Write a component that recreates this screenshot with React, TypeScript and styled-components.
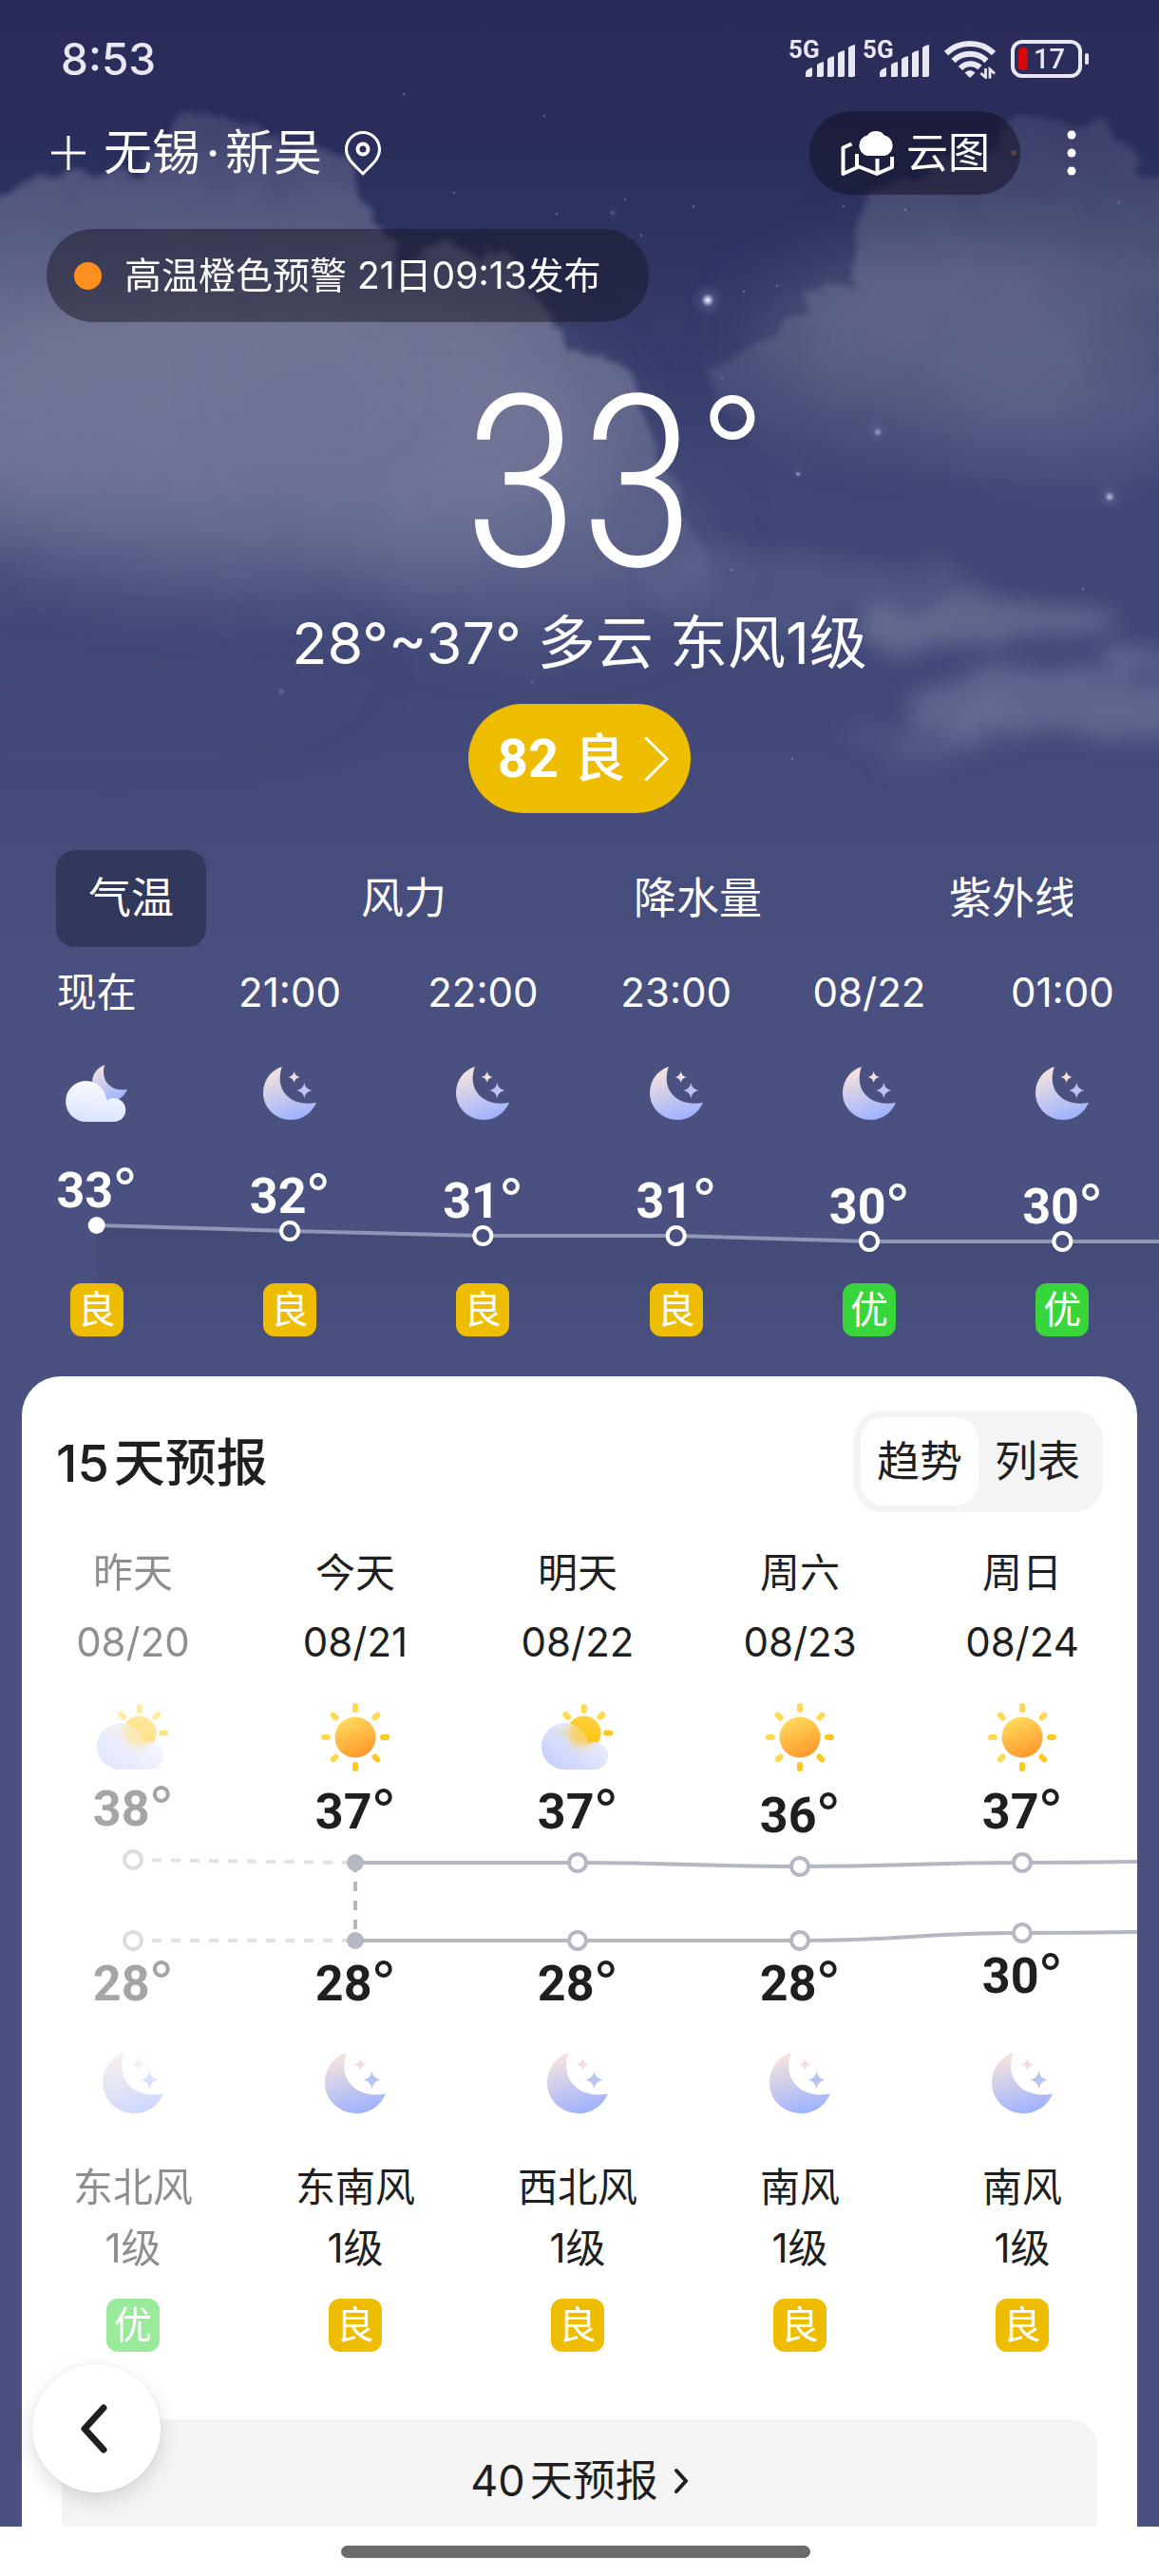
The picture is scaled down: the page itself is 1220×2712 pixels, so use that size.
import React, { useState } from "react";
import styled, { createGlobalStyle } from "styled-components";

const SANS = `Inter, "Noto Sans CJK SC", "Noto Sans", sans-serif`;
const DIGITS = `Roboto, "Noto Sans CJK SC", sans-serif`;
const NARROW = `"Roboto Condensed", Roboto, sans-serif`;
const INK = "#1f1f1f";
const GOOD = "#efbd00";
const BEST = "#38d63b";
const LINE = "#b5b8c2";

const GlobalStyle = createGlobalStyle`
  *, *::before, *::after { box-sizing: border-box; }
  body { margin: 0; background: #fff; font-family: ${SANS}; }
  button { font: inherit; color: inherit; border: 0; padding: 0; background: none; cursor: pointer; }
  h1, h2, p { margin: 0; font-weight: 400; }
  svg { display: block; flex: none; }
`;

const Screen = styled.div`
  position: relative;
  height: 100vh;
  display: flex;
  flex-direction: column;
  overflow: hidden;
`;

const Scroller = styled.main`
  position: relative;
  flex: 1;
  min-height: 0;
  overflow-y: auto;
  scrollbar-width: none;
  color: #fff;
  background: #4a5181;
`;

const Content = styled.div`
  position: relative;
`;

const HiddenDefs = styled.svg`
  position: absolute;
`;

const SkySvg = styled.svg`
  position: absolute;
  inset: 0 0 auto 0;
  width: 100%;
  height: 1100px;
`;

const StatusBar = styled.div`
  position: relative;
  height: 90px;
  padding: 34px 74px 0 64px;
  display: flex;
  align-items: center;
  justify-content: space-between;
  color: #e9e8f2;
`;

const Clock = styled.time`
  font-size: 46px;
  line-height: 56px;
  font-weight: 500;
`;

const StatusIcons = styled.div`
  display: flex;
  align-items: center;
`;

const Signal = styled.div`
  display: flex;
  align-items: flex-start;
  width: 78px;
  height: 40px;
`;

const Network = styled.span`
  width: 18px;
  font-size: 26px;
  line-height: 20px;
  font-weight: 700;
  font-family: ${DIGITS};
  white-space: nowrap;
`;

const BarsSvg = styled.svg`
  margin-top: 5px;
`;

const WifiBox = styled.span`
  margin: 0 16px 0 8px;
`;

const Battery = styled.div`
  display: flex;
  align-items: center;
  gap: 3px;
  &::after {
    content: "";
    width: 4px;
    height: 12px;
    border-radius: 2px;
    background: currentColor;
  }
`;

const BatteryBody = styled.div`
  width: 75px;
  height: 40px;
  padding: 0 14px 0 4px;
  border: 4px solid currentColor;
  border-radius: 12px;
  display: flex;
  align-items: center;
  gap: 6px;
  font-size: 29px;
  line-height: 28px;
  font-weight: 500;
  font-family: ${DIGITS};
  &::before {
    content: "";
    flex: none;
    width: 10px;
    height: 24px;
    border-radius: 4px;
    background: #d40808;
  }
`;

const Header = styled.header`
  position: relative;
  margin-top: 27px;
  height: 88px;
  padding: 0 66px 0 54px;
  display: flex;
  align-items: center;
`;

const IconButton = styled.button`
  display: flex;
  align-items: center;
  justify-content: center;
`;

const City = styled.h1`
  display: flex;
  margin: 0 24px 0 19px;
  font-size: 51px;
  line-height: 60px;
`;

const CityDot = styled.span`
  width: 26px;
  text-align: center;
`;

const CloudMap = styled.button`
  margin-left: auto;
  height: 88px;
  padding: 0 32px 0 33px;
  border-radius: 44px;
  background: rgba(14, 14, 32, 0.5);
  display: flex;
  align-items: center;
  gap: 12px;
  font-size: 44px;
  line-height: 56px;
`;

const MoreButton = styled(IconButton)`
  width: 52px;
  height: 60px;
  margin-left: 28px;
`;

const Alert = styled.a`
  position: relative;
  display: inline-flex;
  align-items: center;
  gap: 24px;
  margin: 36px 0 0 49px;
  height: 98px;
  padding: 0 50px 0 29px;
  border-radius: 49px;
  background: rgba(20, 20, 34, 0.48);
  color: #fff;
  text-decoration: none;
  font-size: 39px;
  line-height: 48px;
  vertical-align: top;
  &::before {
    content: "";
    width: 29px;
    height: 29px;
    border-radius: 50%;
    background: #ff901f;
  }
`;

const Summary = styled.section`
  position: relative;
  padding-top: 71px;
  display: flex;
  flex-direction: column;
  align-items: center;
`;

const NowTemp = styled.p`
  position: relative;
  font-family: ${NARROW};
  font-size: 252px;
  line-height: 200px;
  font-weight: 300;
`;

const NowDegree = styled.span`
  position: absolute;
  right: -72px;
  top: 0;
  font-family: ${SANS};
  font-size: 148px;
  line-height: 124px;
  font-weight: 300;
`;

const NowText = styled.p`
  margin-top: 27px;
  font-size: 61px;
  line-height: 80px;
`;

const AirPill = styled.button`
  margin-top: 24px;
  height: 115px;
  padding: 0 23px 0 31px;
  border-radius: 58px;
  background: ${GOOD};
  display: flex;
  align-items: center;
  font-size: 54px;
  line-height: 64px;
`;

const AirValue = styled.span`
  margin-right: 16px;
  font-family: ${DIGITS};
  font-size: 56px;
  font-weight: 700;
`;

const AirLevel = styled.span`
  margin-right: 20px;
  font-weight: 500;
`;

const Tabs = styled.div`
  position: relative;
  margin: 39px 91px 0 59px;
  display: flex;
  gap: 129px;
  overflow: hidden;
`;

const Tab = styled.button<{ $active: boolean }>`
  flex: none;
  height: 102px;
  padding: 0 34px;
  border-radius: 20px;
  font-size: 45px;
  line-height: 56px;
  background: ${(p) => (p.$active ? "#32385b" : "transparent")};
`;

const HourRow = styled.div<{ $top?: number }>`
  position: relative;
  display: grid;
  grid-template-columns: repeat(6, minmax(0, 1fr));
  justify-items: center;
  align-items: center;
  margin-top: ${(p) => p.$top ?? 0}px;
  font-size: 42px;
  line-height: 56px;
`;

const HourChartSpace = styled.div`
  margin-top: 6px;
`;

const Chart = styled.svg<{ $height: number }>`
  position: relative;
  width: 100%;
  height: ${(p) => p.$height}px;
  overflow: visible;
`;

const ChartValue = styled.text`
  font-family: ${DIGITS};
  font-size: 52px;
  font-weight: 700;
  text-anchor: middle;
`;

const ChartDegree = styled.tspan`
  font-family: ${SANS};
  font-size: 54px;
  font-weight: 400;
`;

const Badge = styled.span<{ $level: string }>`
  width: 56px;
  height: 56px;
  border-radius: 12px;
  background: ${(p) => (p.$level === "优" ? BEST : GOOD)};
  color: #fff;
  font-size: 40px;
  line-height: 56px;
  text-align: center;
`;

const Card = styled.section`
  position: relative;
  margin: 42px 23px 0;
  padding: 36px 0 40px;
  border-radius: 41px 41px 0 0;
  background: #fff;
  color: ${INK};
  overflow: hidden;
`;

const CardHead = styled.div`
  padding: 0 36px;
  display: flex;
  align-items: center;
  justify-content: space-between;
`;

const CardTitle = styled.h2`
  display: flex;
  gap: 5px;
  padding-top: 4px;
  font-size: 54px;
  line-height: 64px;
  font-weight: 500;
`;

const Segment = styled.div`
  height: 107px;
  padding: 7px;
  border-radius: 30px;
  background: #f4f4f4;
  display: flex;
`;

const SegmentButton = styled.button<{ $active: boolean }>`
  width: 124px;
  border-radius: 24px;
  font-size: 45px;
  line-height: 56px;
  background: ${(p) => (p.$active ? "#fff" : "transparent")};
`;

const DayArea = styled.div`
  padding-right: 4px;
`;

const DayRow = styled.div<{ $top: number }>`
  display: grid;
  grid-template-columns: repeat(5, minmax(0, 1fr));
  justify-items: center;
  margin-top: ${(p) => p.$top}px;
  font-size: 42px;
  line-height: 54px;
  & > :first-child {
    opacity: 0.5;
  }
`;

const MoreDays = styled.a`
  margin: 71px 42px 0;
  height: 130px;
  border-radius: 28px;
  background: #f4f4f4;
  display: flex;
  align-items: center;
  justify-content: center;
  gap: 5px;
  color: ${INK};
  text-decoration: none;
  font-size: 45px;
  line-height: 56px;
`;

const MoreArrow = styled.svg`
  margin-left: 12px;
`;

const BackButton = styled(IconButton)`
  position: absolute;
  left: 34px;
  bottom: 88px;
  width: 135px;
  height: 135px;
  padding-right: 6px;
  border-radius: 50%;
  background: #fff;
  box-shadow: 0 8px 20px rgba(40, 50, 50, 0.16), 0 0 3px rgba(0, 0, 0, 0.08);
`;

const BottomBar = styled.footer`
  height: 52px;
  display: flex;
  justify-content: center;
  padding: 20px 8px 0 0;
  background: #fff;
  &::after {
    content: "";
    width: 494px;
    height: 13px;
    border-radius: 7px;
    background: #6b6b6b;
  }
`;

const SharedDefs = () => (
  <HiddenDefs width="0" height="0" aria-hidden="true">
    <defs>
      <linearGradient id="moonFill" x1="0.3" y1="0" x2="0.6" y2="1">
        <stop offset="0.08" stopColor="#f1e0de" />
        <stop offset="1" stopColor="#9db2ff" />
      </linearGradient>
      <linearGradient id="cloudFill" x1="0.6" y1="0" x2="0.4" y2="1">
        <stop offset="0" stopColor="#fbfafc" />
        <stop offset="1" stopColor="#dbe3ff" />
      </linearGradient>
      <linearGradient id="dayCloudFill" x1="0.8" y1="0.3" x2="0.15" y2="1">
        <stop offset="0" stopColor="#f3f4fb" />
        <stop offset="1" stopColor="#c2cdff" />
      </linearGradient>
      <linearGradient id="sunFill" x1="0.3" y1="0" x2="0.7" y2="1">
        <stop offset="0" stopColor="#ffdc5c" />
        <stop offset="1" stopColor="#ff962b" />
      </linearGradient>
      <linearGradient id="smallSunFill" x1="0.7" y1="0" x2="0.4" y2="1">
        <stop offset="0" stopColor="#ffd440" />
        <stop offset="1" stopColor="#ffbb00" />
      </linearGradient>
      <filter id="sunGlow" x="-50%" y="-50%" width="200%" height="200%">
        <feGaussianBlur stdDeviation="4" />
      </filter>
      <clipPath id="dayCloudClip">
        <path d="M24.5 68a24.5 24.5 0 1 1 22.8-33.5q1.6 4 2 6a14.5 14.5 0 1 1 7.4 27.5z" />
      </clipPath>
    </defs>
  </HiddenDefs>
);

const MoonIcon = ({ size }: { size: number }) => (
  <svg width={size} height={size} viewBox="0 0 64 64" overflow="visible" aria-hidden="true">
    <path d="M22.6 0C9 4.5 0 17 0 31.5 0 50 15 64 33.5 64 47 64 58.5 56 64 43.2 38 49 12 32 22.6 0Z" fill="url(#moonFill)" />
    <path d="M37.3 5.5Q38.2 11.6 44.3 12.5 38.2 13.4 37.3 19.5 36.4 13.4 30.3 12.5 36.4 11.6 37.3 5.5Z" fill="#f0e0e2" />
    <path d="M49.5 19.5Q50.9 27.3 58.7 28.7 50.9 30.1 49.5 37.9 48.1 30.1 40.3 28.7 48.1 27.3 49.5 19.5Z" fill="#bac4f3" />
  </svg>
);

const CloudMoonIcon = () => (
  <svg width="66" height="60" viewBox="0 0 66 60" overflow="visible" aria-hidden="true">
    <path d="M41 0C32 4 28 11 28 19c0 12 9 19 19 19 9 0 15-5 18-12.3C52 29 36 20 41 0Z" fill="url(#moonFill)" />
    <path d="M22 60a21.5 21.5 0 1 1 20.5-26.5q.7 2 .8 4A12.5 12.5 0 1 1 51.5 60z" fill="url(#cloudFill)" />
  </svg>
);

const Rays = ({ cx, cy, r, angles }: { cx: number; cy: number; r: number; angles: number[] }) => (
  <>
    {angles.map((a) => (
      <rect
        key={a}
        x={cx - 3}
        y={cy - r - 5}
        width="6"
        height="10"
        rx="3"
        fill={a > 60 && a < 200 ? "#fcc71f" : "#ffd94f"}
        transform={`rotate(${a} ${cx} ${cy})`}
      />
    ))}
  </>
);

const SunIcon = () => (
  <svg width="72" height="76" viewBox="0 0 72 76" aria-hidden="true">
    <Rays cx={36} cy={38} r={31} angles={[0, 45, 90, 135, 180, 225, 270, 315]} />
    <circle cx="36" cy="38" r="21.5" fill="url(#sunFill)" />
  </svg>
);

const SunCloudIcon = () => (
  <svg width="76" height="76" viewBox="0 -4 76 76" aria-hidden="true">
    <Rays cx={44.7} cy={29.5} r={25.5} angles={[-45, 0, 45, 90]} />
    <circle cx="44.7" cy="29.5" r="18" fill="url(#smallSunFill)" />
    <g clipPath="url(#dayCloudClip)">
      <rect width="76" height="72" fill="url(#dayCloudFill)" />
      <circle cx="43" cy="29" r="15" fill="#ffc933" opacity="0.75" filter="url(#sunGlow)" />
      <ellipse cx="20" cy="29" rx="6" ry="2" fill="#ffc933" opacity="0.6" filter="url(#sunGlow)" />
    </g>
  </svg>
);

const SignalBars = () => (
  <BarsSvg width="53" height="34" viewBox="0 0 53 34" aria-hidden="true">
    <path
      fill="currentColor"
      d="M0 34v-4q0-4 7-6v8q0 2-2 2z M12 34V21q2-2 7-3v14q0 2-2 2z M23 34V15q2-2 7-3v20q0 2-2 2z M34 34V9q2-2 7-3v26q0 2-2 2z M45 34V3q2-2 7-3v32q0 2-2 2z"
    />
  </BarsSvg>
);

const WifiIcon = () => (
  <svg width="54" height="42" viewBox="0 0 54 42" fill="none" stroke="currentColor" aria-hidden="true">
    <path d="M2 15a36 36 0 0 1 50 0" strokeWidth="6" />
    <path d="M9.5 23a25 25 0 0 1 35 0" strokeWidth="6" />
    <path d="M17 31a14.5 14.5 0 0 1 20.5-1" strokeWidth="6" />
    <path d="M27 41l-5.5-5.5q5.5-5 11 0z" fill="currentColor" stroke="none" />
    <path d="M43.5 31v9.5l-5-4.5M48 41.5V32l5 4.5" strokeWidth="2.8" />
  </svg>
);

const PinIcon = () => (
  <svg width="38" height="47" viewBox="0 0 38 47" fill="none" stroke="#fff" strokeWidth="3" aria-hidden="true">
    <path d="M19 45C10 35.5 1.5 29.5 1.5 19.5a17.5 18 0 0 1 35 0C36.5 29.5 28 35.5 19 45Z" strokeLinejoin="round" />
    <circle cx="19" cy="19" r="5.5" strokeWidth="4" />
  </svg>
);

const CloudMapIcon = () => (
  <svg width="57" height="50" viewBox="0 0 57 50" fill="none" stroke="#fff" strokeWidth="4" strokeLinejoin="round" aria-hidden="true">
    <path d="M11.5 15.5L2.5 19.5V47L19 39.5 38 47 54 40V29" />
    <path d="M17 26v13M38.5 31v15" />
    <path d="M28 28a11 11 0 0 1 0-21.5A10.5 9.5 0 0 1 46 6.5 11 11 0 0 1 46 28z" fill="#fff" stroke="none" />
  </svg>
);

const faintStars = [
  [425, 99], [478, 203], [658, 210], [730, 217], [888, 217], [1178, 213], [573, 122], [675, 248], [818, 301],
  [783, 307], [953, 221], [586, 225], [760, 398], [770, 600], [834, 799], [1140, 620], [700, 760], [560, 718],
];

const Sky = () => (
  <SkySvg viewBox="0 0 1220 1100" preserveAspectRatio="none" aria-hidden="true">
    <defs>
      <linearGradient id="sky" x1="0" y1="0" x2="0" y2="1">
        <stop offset="0" stopColor="#2b2b5a" />
        <stop offset="0.15" stopColor="#2a2e5b" />
        <stop offset="0.3" stopColor="#333a68" />
        <stop offset="0.45" stopColor="#3f4574" />
        <stop offset="0.7" stopColor="#434a79" />
        <stop offset="1" stopColor="#4a5181" />
      </linearGradient>
      <linearGradient id="leftCloud" gradientUnits="userSpaceOnUse" x1="200" y1="110" x2="200" y2="700">
        <stop offset="0" stopColor="#77799c" stopOpacity="0.22" />
        <stop offset="0.16" stopColor="#7a7c9f" stopOpacity="0.5" />
        <stop offset="0.4" stopColor="#8487a2" stopOpacity="0.62" />
        <stop offset="0.65" stopColor="#8184a3" stopOpacity="0.42" />
        <stop offset="0.95" stopColor="#7075a0" stopOpacity="0" />
      </linearGradient>
      <linearGradient id="rightCloud" gradientUnits="userSpaceOnUse" x1="1000" y1="100" x2="1000" y2="520">
        <stop offset="0" stopColor="#77799c" stopOpacity="0.2" />
        <stop offset="0.45" stopColor="#80829f" stopOpacity="0.42" />
        <stop offset="1" stopColor="#777b9f" stopOpacity="0" />
      </linearGradient>
      <radialGradient id="starGlow">
        <stop offset="0" stopColor="#fff" />
        <stop offset="0.2" stopColor="#dfe4ff" stopOpacity="0.6" />
        <stop offset="0.4" stopColor="#aab4e8" stopOpacity="0.15" />
        <stop offset="1" stopColor="#aab4e8" stopOpacity="0" />
      </radialGradient>
      <filter id="ragged" x="-10%" y="-10%" width="120%" height="120%">
        <feTurbulence type="fractalNoise" baseFrequency="0.022" numOctaves="4" seed="8" result="n" />
        <feDisplacementMap in="SourceGraphic" in2="n" scale="46" xChannelSelector="R" yChannelSelector="G" />
        <feGaussianBlur stdDeviation="3" />
      </filter>
      <filter id="wispy" x="-30%" y="-60%" width="160%" height="220%">
        <feTurbulence type="fractalNoise" baseFrequency="0.008 0.020" numOctaves="4" seed="3" result="n" />
        <feDisplacementMap in="SourceGraphic" in2="n" scale="80" xChannelSelector="R" yChannelSelector="G" />
        <feGaussianBlur stdDeviation="11" />
      </filter>
      <filter id="soft" x="-60%" y="-60%" width="220%" height="220%">
        <feGaussianBlur stdDeviation="40" />
      </filter>
    </defs>
    <rect width="1220" height="1100" fill="url(#sky)" />
    <g filter="url(#soft)">
      <ellipse cx="270" cy="460" rx="370" ry="150" fill="#8285a3" opacity="0.5" />
      <ellipse cx="560" cy="580" rx="180" ry="80" fill="#7a7ea0" opacity="0.35" />
      <ellipse cx="990" cy="360" rx="190" ry="90" fill="#80829f" opacity="0.35" />
      <ellipse cx="1130" cy="440" rx="140" ry="60" fill="#777b9f" opacity="0.3" />
    </g>
    <path
      filter="url(#ragged)"
      fill="url(#leftCloud)"
      d="M-60 215L20 205 50 182 140 182 160 150 195 122 230 134 290 132 305 152 350 162 380 182 394 215 400 248 422 268 432 295 445 272 465 264 490 276 520 260 548 280 562 310 588 340 598 372 635 382 668 405 678 440 692 472 702 515 728 555 745 610 750 670 700 730 560 760 300 780-60 780Z"
    />
    <g filter="url(#soft)">
      <ellipse cx="330" cy="410" rx="80" ry="20" fill="#5f6389" opacity="0.4" />
      <ellipse cx="120" cy="700" rx="240" ry="50" fill="#454b7b" opacity="0.45" />
    </g>
    <path
      filter="url(#ragged)"
      fill="url(#rightCloud)"
      d="M905 215L908 260 893 282 896 306 850 316 815 346 775 372 740 390 780 450 860 520 890 560 1280 560V185L1195 178 1175 155 1165 132 1142 136 1110 120 1080 116 1052 132 1040 160 960 190Z"
    />
    <g filter="url(#wispy)">
      <ellipse cx="1040" cy="656" rx="130" ry="26" fill="#8f92ad" opacity="0.42" />
      <ellipse cx="1140" cy="742" rx="180" ry="38" fill="#8a8dab" opacity="0.42" />
      <ellipse cx="980" cy="780" rx="120" ry="18" fill="#7d82a8" opacity="0.25" />
      <ellipse cx="860" cy="620" rx="190" ry="36" fill="#757aa0" opacity="0.25" />
    </g>
    <circle cx="745" cy="316" r="18" fill="url(#starGlow)" />
    <circle cx="1168" cy="523" r="14" fill="url(#starGlow)" opacity="0.7" />
    <circle cx="924" cy="455" r="12" fill="url(#starGlow)" opacity="0.5" />
    <circle cx="840" cy="499" r="7" fill="url(#starGlow)" opacity="0.6" />
    <circle cx="645" cy="224" r="8" fill="url(#starGlow)" opacity="0.25" />
    <circle cx="296" cy="728" r="8" fill="url(#starGlow)" opacity="0.25" />
    <circle cx="1067" cy="161" r="3" fill="#d99a6c" opacity="0.6" />
    <g fill="#b9bede" opacity="0.35">
      {faintStars.map(([x, y]) => (
        <circle key={`${x}-${y}`} cx={x} cy={y} r="1.3" />
      ))}
    </g>
  </SkySvg>
);

const tabs = ["气温", "风力", "降水量", "紫外线"];

const hours = [
  { time: "现在", temp: 33, y: 103, air: "良" },
  { time: "21:00", temp: 32, y: 109, air: "良" },
  { time: "22:00", temp: 31, y: 114, air: "良" },
  { time: "23:00", temp: 31, y: 114, air: "良" },
  { time: "08/22", temp: 30, y: 120, air: "优" },
  { time: "01:00", temp: 30, y: 120, air: "优" },
];

const days = [
  { name: "昨天", date: "08/20", cloudy: true, high: 38, highY: 91, low: 28, lowY: 176, wind: "东北风", air: "优" },
  { name: "今天", date: "08/21", cloudy: false, high: 37, highY: 94, low: 28, lowY: 176, wind: "东南风", air: "良" },
  { name: "明天", date: "08/22", cloudy: true, high: 37, highY: 94, low: 28, lowY: 176, wind: "西北风", air: "良" },
  { name: "周六", date: "08/23", cloudy: false, high: 36, highY: 98, low: 28, lowY: 176, wind: "南风", air: "良" },
  { name: "周日", date: "08/24", cloudy: false, high: 37, highY: 94, low: 30, lowY: 168, wind: "南风", air: "良" },
];

const at = (index: number, count: number) => ((index + 0.5) * 100) / count;

const Degrees = ({ x, y, value, color }: { x: number; y: number; value: number; color: string }) => (
  <ChartValue x={`${x}%`} y={y} fill={color}>
    {value}
    <ChartDegree dy="-3">°</ChartDegree>
  </ChartValue>
);

const HourChart = () => {
  const x = (i: number) => at(i, hours.length);
  const points = hours.map((h, i) => `${x(i)},${h.y}`).join(" ");
  return (
    <Chart $height={164} role="img" aria-label="逐小时气温">
      <svg width="100%" height="248" viewBox="0 0 100 248" preserveAspectRatio="none">
        <defs>
          <linearGradient id="hourArea" gradientUnits="userSpaceOnUse" x1="0" y1="100" x2="0" y2="248">
            <stop offset="0" stopColor="#3f4670" stopOpacity="0.65" />
            <stop offset="0.3" stopColor="#3f4670" stopOpacity="0.5" />
            <stop offset="1" stopColor="#3f4670" stopOpacity="0" />
          </linearGradient>
        </defs>
        <polygon points={`${points} 100,120 100,248 ${x(0)},248`} fill="url(#hourArea)" />
        <polyline points={`${points} 100,120`} fill="none" stroke="#9195b6" strokeWidth="4" vectorEffect="non-scaling-stroke" />
      </svg>
      {hours.map((h, i) => (
        <g key={h.time}>
          <circle cx={`${x(i)}%`} cy={h.y} r="9" fill={i === 0 ? "#fff" : "#4a5181"} stroke="#fff" strokeWidth={i === 0 ? 0 : 4} />
          <Degrees x={x(i)} y={h.y - 19} value={h.temp} color="#fff" />
        </g>
      ))}
    </Chart>
  );
};

const DayChart = () => {
  const x = (i: number) => at(i, days.length);
  const curve = (key: "highY" | "lowY", end: number) => {
    const pts = [...days.slice(1).map((d, i) => [x(i + 1), d[key]]), [x(5), end]];
    return pts.reduce((path, [px, py], i) => {
      if (i === 0) return `M${px} ${py}`;
      const [qx, qy] = pts[i - 1];
      const mid = (qx + px) / 2;
      return `${path}C${mid} ${qy} ${mid} ${py} ${px} ${py}`;
    }, "");
  };
  const rows = [
    { key: "highY", temp: "high", shift: -36 },
    { key: "lowY", temp: "low", shift: 63 },
  ] as const;
  return (
    <Chart $height={253} role="img" aria-label="每日最高与最低气温">
      <svg width="100%" height="253" viewBox="0 0 100 253" preserveAspectRatio="none" overflow="visible">
        <g fill="none" stroke={LINE} strokeWidth="4">
          <path d={curve("highY", 92)} vectorEffect="non-scaling-stroke" />
          <path d={curve("lowY", 166)} vectorEffect="non-scaling-stroke" />
        </g>
      </svg>
      <g stroke={LINE} strokeWidth="4" strokeDasharray="10 10">
        <line x1={`${x(0)}%`} y1={days[0].highY} x2={`${x(1)}%`} y2={days[1].highY} opacity="0.4" />
        <line x1={`${x(0)}%`} y1={days[0].lowY} x2={`${x(1)}%`} y2={days[1].lowY} opacity="0.4" />
        <line x1={`${x(1)}%`} y1={days[1].highY} x2={`${x(1)}%`} y2={days[1].lowY} />
      </g>
      {rows.map((row) =>
        days.map((d, i) => (
          <g key={row.key + d.date}>
            <circle
              cx={`${x(i)}%`}
              cy={d[row.key]}
              r="9"
              fill={i === 1 ? LINE : "#fff"}
              stroke={i === 0 ? "#dcdde1" : LINE}
              strokeWidth={i === 1 ? 0 : 4}
            />
            <Degrees x={x(i)} y={d[row.key] + row.shift} value={d[row.temp]} color={i === 0 ? "#a5a5a5" : INK} />
          </g>
        ))
      )}
    </Chart>
  );
};

export default function App() {
  const [tab, setTab] = useState(tabs[0]);
  const [view, setView] = useState("趋势");

  return (
    <Screen>
      <GlobalStyle />
      <SharedDefs />
      <Scroller>
        <Content>
          <Sky />
          <StatusBar>
            <Clock>8:53</Clock>
            <StatusIcons>
              <Signal>
                <Network>5G</Network>
                <SignalBars />
              </Signal>
              <Signal>
                <Network>5G</Network>
                <SignalBars />
              </Signal>
              <WifiBox>
                <WifiIcon />
              </WifiBox>
              <Battery>
                <BatteryBody>17</BatteryBody>
              </Battery>
            </StatusIcons>
          </StatusBar>

          <Header>
            <IconButton aria-label="添加城市">
              <svg width="36" height="36" viewBox="0 0 36 36" stroke="#fff" strokeWidth="3" aria-hidden="true">
                <path d="M18 0v36M0 18h36" />
              </svg>
            </IconButton>
            <City>
              无锡<CityDot>·</CityDot>新吴
            </City>
            <PinIcon />
            <CloudMap>
              <CloudMapIcon />
              云图
            </CloudMap>
            <MoreButton aria-label="更多">
              <svg width="10" height="48" viewBox="0 0 10 48" fill="#fff" aria-hidden="true">
                <circle cx="5" cy="5" r="4.5" />
                <circle cx="5" cy="24" r="4.5" />
                <circle cx="5" cy="43" r="4.5" />
              </svg>
            </MoreButton>
          </Header>

          <Alert href="#alert">高温橙色预警 21日09:13发布</Alert>

          <Summary>
            <NowTemp>
              33<NowDegree>°</NowDegree>
            </NowTemp>
            <NowText>28°~37° 多云 东风1级</NowText>
            <AirPill>
              <AirValue>82</AirValue>
              <AirLevel>良</AirLevel>
              <svg width="26" height="48" viewBox="0 0 26 48" fill="none" stroke="#fff" strokeWidth="3" aria-hidden="true">
                <path d="M1.5 1.5L24 24 1.5 46.5" />
              </svg>
            </AirPill>
          </Summary>

          <Tabs role="tablist">
            {tabs.map((name) => (
              <Tab key={name} role="tab" aria-selected={tab === name} $active={tab === name} onClick={() => setTab(name)}>
                {name}
              </Tab>
            ))}
          </Tabs>

          <HourRow $top={20}>
            {hours.map((h) => (
              <span key={h.time}>{h.time}</span>
            ))}
          </HourRow>
          <HourRow $top={48}>
            {hours.map((h, i) => (i === 0 ? <CloudMoonIcon key={h.time} /> : <MoonIcon key={h.time} size={56} />))}
          </HourRow>
          <HourChartSpace>
            <HourChart />
          </HourChartSpace>
          <HourRow>
            {hours.map((h) => (
              <Badge key={h.time} $level={h.air}>
                {h.air}
              </Badge>
            ))}
          </HourRow>

          <Card>
            <CardHead>
              <CardTitle>
                <span>15</span>
                <span>天预报</span>
              </CardTitle>
              <Segment>
                {["趋势", "列表"].map((name) => (
                  <SegmentButton key={name} aria-pressed={view === name} $active={view === name} onClick={() => setView(name)}>
                    {name}
                  </SegmentButton>
                ))}
              </Segment>
            </CardHead>
            <DayArea>
              <DayRow $top={37}>
                {days.map((d) => (
                  <span key={d.date}>{d.name}</span>
                ))}
              </DayRow>
              <DayRow $top={19}>
                {days.map((d) => (
                  <span key={d.date}>{d.date}</span>
                ))}
              </DayRow>
              <DayRow $top={35}>
                {days.map((d) => (d.cloudy ? <SunCloudIcon key={d.date} /> : <SunIcon key={d.date} />))}
              </DayRow>
              <DayChart />
              <DayRow $top={41}>
                {days.map((d) => (
                  <MoonIcon key={d.date} size={64} />
                ))}
              </DayRow>
              <DayRow $top={51}>
                {days.map((d) => (
                  <span key={d.date}>{d.wind}</span>
                ))}
              </DayRow>
              <DayRow $top={10}>
                {days.map((d) => (
                  <span key={d.date}>1级</span>
                ))}
              </DayRow>
              <DayRow $top={26}>
                {days.map((d) => (
                  <Badge key={d.date} $level={d.air}>
                    {d.air}
                  </Badge>
                ))}
              </DayRow>
            </DayArea>
            <MoreDays href="#forty-days">
              <span>40</span>
              <span>天预报</span>
              <MoreArrow width="15" height="28" viewBox="0 0 15 28" fill="none" stroke={INK} strokeWidth="4" strokeLinecap="round" strokeLinejoin="round" aria-hidden="true">
                <path d="M2 3L12 14 2 25" />
              </MoreArrow>
            </MoreDays>
          </Card>
        </Content>
      </Scroller>
      <BackButton aria-label="返回">
        <svg width="30" height="54" viewBox="0 0 30 54" fill="none" stroke={INK} strokeWidth="7" strokeLinecap="round" strokeLinejoin="round" aria-hidden="true">
          <path d="M25 5L5 27 25 49" />
        </svg>
      </BackButton>
      <BottomBar />
    </Screen>
  );
}
